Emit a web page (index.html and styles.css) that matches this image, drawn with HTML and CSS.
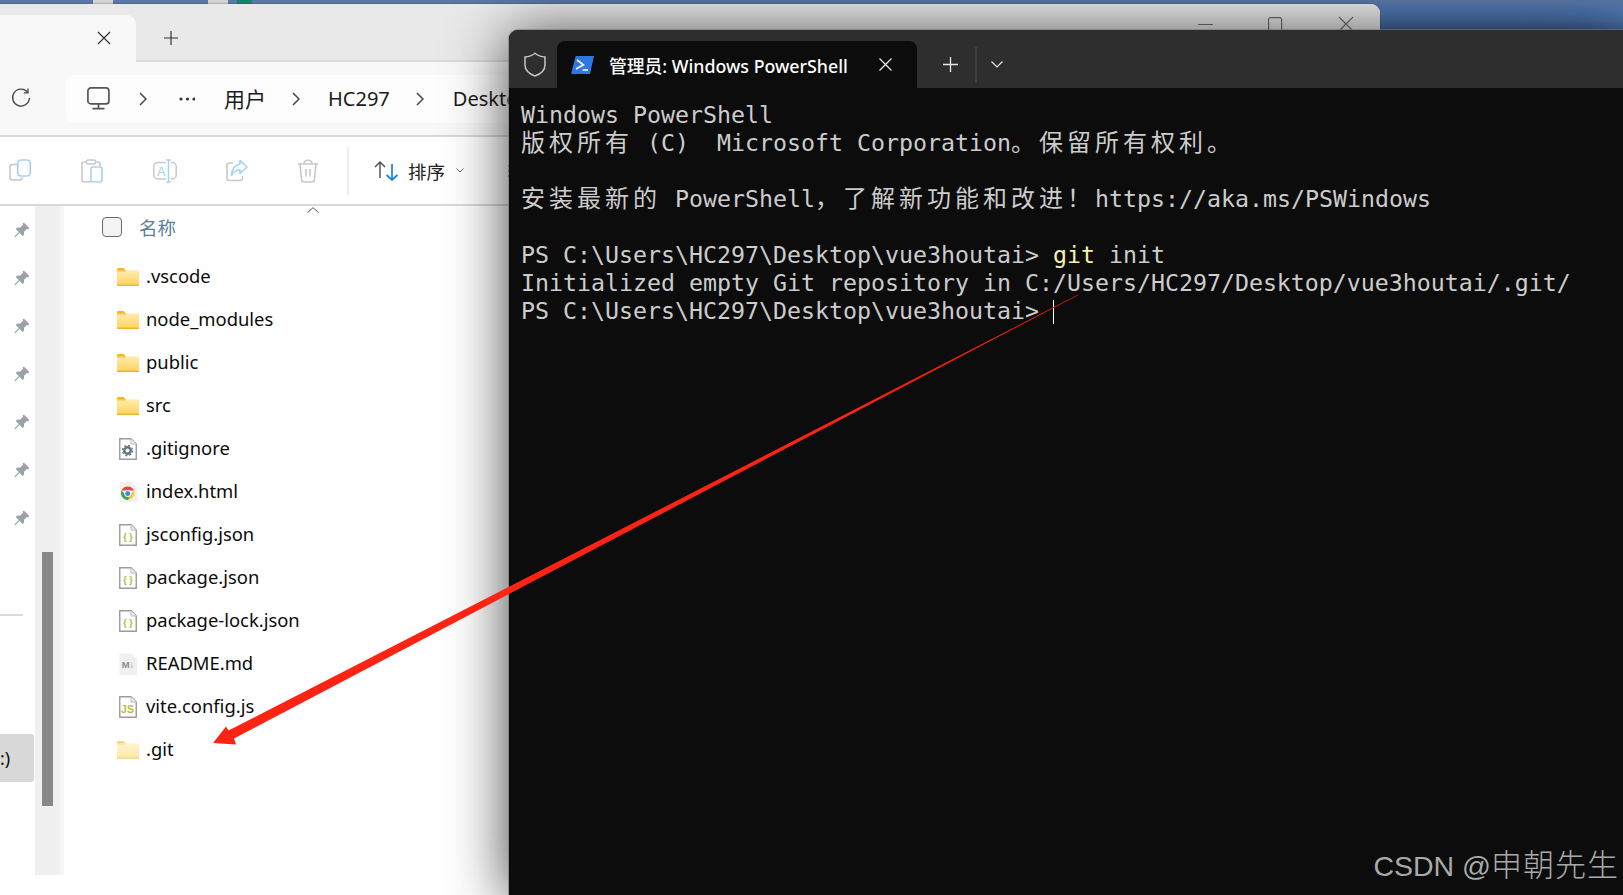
FILE: index.html
```html
<!DOCTYPE html>
<html lang="zh-CN">
<head>
<meta charset="utf-8">
<title>Windows PowerShell</title>
<link rel="stylesheet" href="styles.css">
</head>
<body>
<svg class="defs" width="0" height="0" aria-hidden="true">
  <defs>
    <linearGradient id="fg" x1="0" y1="0" x2="0" y2="1"><stop offset="0" stop-color="#ffedac"/><stop offset="1" stop-color="#ffd35f"/></linearGradient>
    <symbol id="folder" viewBox="0 0 22 18">
      <path d="M0 1.2Q0 0 1.2 0H6.5L9 2.4H0Z" fill="#f9b51c"/>
      <rect x="0" y="2.4" width="22" height="15" fill="url(#fg)"/>
      <rect x="0" y="16.6" width="22" height="1.4" fill="#eeb430"/>
      <rect x="0" y="2.4" width="9" height="1" fill="#f9b51c"/>
    </symbol>
    <symbol id="doc" viewBox="0 0 18 22">
      <path d="M.75.75H12L17.25 6V21.25H.75Z" fill="#fff" stroke="#9b9b9b" stroke-width="1.4"/>
      <path d="M12 .75V6H17.25" fill="#eee" stroke="#bbb" stroke-width="1"/>
    </symbol>
    <symbol id="pin" viewBox="0 0 16 16">
      <path d="M9.8.6 15.4 6.2 14 7.4 13 6.8 10 9.8 10.2 12.6 8.8 14 5.6 10.8 1 15.4.2 14.8 4.8 10 1.8 7 3.2 5.6 6 5.8 9 2.8 8.6 2Z" fill="#98a2a9"/>
    </symbol>
    <symbol id="chev" viewBox="0 0 8 14">
      <path d="M1 1 7 7 1 13" fill="none" stroke="#444" stroke-width="1.5"/>
    </symbol>
  </defs>
</svg>

<div class="strip">
  <span class="mark mark-a"></span>
  <span class="mark mark-b"></span>
  <span class="mark mark-c"></span>
</div>

<section class="explorer">
  <header class="ex-tabs">
    <div class="ex-tab">
      <svg class="ex-tab-x" width="14" height="14" viewBox="0 0 14 14"><path d="M1 1 13 13M13 1 1 13" stroke="#333" stroke-width="1.2"/></svg>
    </div>
    <svg class="ex-plus" width="16" height="16" viewBox="0 0 16 16"><path d="M8 1V15M1 8H15" stroke="#333" stroke-width="1.2"/></svg>
    <div class="win-ctrls">
      <svg width="16" height="14" viewBox="0 0 16 14"><path d="M0 7.5H15" stroke="#6f6f6f" stroke-width="1.2"/></svg>
      <svg width="16" height="14" viewBox="0 0 16 14"><rect x=".6" y=".6" width="13" height="20" rx="2" fill="none" stroke="#6f6f6f" stroke-width="1.2"/></svg>
      <svg width="16" height="14" viewBox="0 0 16 14"><path d="M1 0 15 14M15 0 1 14" stroke="#6f6f6f" stroke-width="1.2"/></svg>
    </div>
  </header>

  <nav class="ex-address">
    <svg class="refresh" width="20" height="20" viewBox="0 0 20 20"><path d="M16.6 4.4A8.4 8.4 0 1 0 18.4 10" fill="none" stroke="#444" stroke-width="1.3"/><path d="M17 .6V4.8H12.8" fill="none" stroke="#444" stroke-width="1.3"/></svg>
    <div class="crumbs">
      <svg width="23" height="23" viewBox="0 0 23 23"><rect x=".9" y=".9" width="21" height="16" rx="3" fill="none" stroke="#555" stroke-width="1.7"/><path d="M11.5 17V21M5.5 21.6H17.5" stroke="#555" stroke-width="1.7"/></svg>
      <svg class="chev" width="8" height="14"><use href="#chev"/></svg>
      <svg class="dots" width="19" height="6" viewBox="0 0 19 6"><circle cx="5" cy="3" r="1.6" fill="#333"/><circle cx="11.5" cy="3" r="1.6" fill="#333"/><circle cx="18" cy="3" r="1.6" fill="#333"/></svg>
      <span class="crumb crumb-cjk">用户</span>
      <svg class="chev" width="8" height="14"><use href="#chev"/></svg>
      <span class="crumb crumb-hc">HC297</span>
      <svg class="chev" width="8" height="14"><use href="#chev"/></svg>
      <span class="crumb">Desktop</span>
    </div>
  </nav>

  <div class="ex-toolbar">
    <svg class="tool" width="22" height="24" viewBox="0 0 22 24"><path d="M8 5.5H3.5Q1 5.5 1 8V18.5Q1 21 3.500 21H11Q13 21 13.500 18.500" fill="none" stroke="#c8c8c8" stroke-width="1.600"/><rect x="8.800" y="1" width="12.400" height="16" rx="3" fill="#fff" stroke="#a6d3f5" stroke-width="1.600"/></svg>
    <svg class="tool" width="22" height="24" viewBox="0 0 22 24"><path d="M10 22.800H3Q1 22.800 1 20.800V5Q1 3 3 3H17Q19 3 19 5V7" fill="none" stroke="#c8c8c8" stroke-width="1.600"/><rect x="5.500" y="1" width="9" height="4" rx="1.500" fill="#fff" stroke="#c8c8c8" stroke-width="1.400"/><rect x="10" y="8" width="11" height="15" rx="2" fill="#fff" stroke="#a6d3f5" stroke-width="1.600"/></svg>
    <svg class="tool" width="24" height="24" viewBox="0 0 24 24"><rect x=".8" y="3.500" width="22.400" height="16.500" rx="4" fill="none" stroke="#c8c8c8" stroke-width="1.500"/><rect x="13" y="1" width="5" height="22" fill="#fff"/><path d="M15.500 1V23M13 1H18M13 23H18" stroke="#a6d3f5" stroke-width="1.500" fill="none"/><text class="tool-a" x="4" y="16.500">A</text></svg>
    <svg class="tool tool-share" width="22" height="24" viewBox="0 0 22 24"><path d="M7 4H3.500Q1 4 1 6.500V19Q1 21.500 3.500 21.500H14Q16.500 21.500 16.500 19V17" fill="none" stroke="#c8c8c8" stroke-width="1.600"/><path d="M14 1.500 21 8 14 14.500V11Q8.500 11 5.500 16.500 6 6.500 14 5Z" fill="#fff" stroke="#a6d3f5" stroke-width="1.600" stroke-linejoin="round"/></svg>
    <svg class="tool tool-trash" width="22" height="24" viewBox="0 0 22 24"><path d="M1 5H21M7 5Q7 1.200 11 1.200T15 5M3 5 4.500 20.500Q4.700 23 7 23H15Q17.300 23 17.500 20.500L19 5M9 10V17.500M13 10V17.500" fill="none" stroke="#c8c8c8" stroke-width="1.600"/></svg>
    <span class="tool-sep"></span>
    <svg class="sort-ic" width="24" height="20" viewBox="0 0 24 20"><path d="M6 17V1M1 6 6 1 11 6" fill="none" stroke="#555" stroke-width="1.500"/><path d="M18 3V19M12.500 14 18 19 23.500 14" fill="none" stroke="#1583dc" stroke-width="1.700"/></svg>
    <span class="sort-label">排序</span>
    <svg class="sort-caret" width="8" height="5" viewBox="0 0 8 5"><path d="M.5.500 4 4 7.500.500" fill="none" stroke="#666" stroke-width="1"/></svg>
    <svg class="more" width="8" height="12" viewBox="0 0 8 12"><path d="M0 1H8M0 6H8M0 11H8" stroke="#555" stroke-width="1.400"/></svg>
  </div>

  <div class="ex-body">
    <aside class="pins">
      <div class="pin"><svg width="16" height="16"><use href="#pin"/></svg></div>
      <div class="pin"><svg width="16" height="16"><use href="#pin"/></svg></div>
      <div class="pin"><svg width="16" height="16"><use href="#pin"/></svg></div>
      <div class="pin"><svg width="16" height="16"><use href="#pin"/></svg></div>
      <div class="pin"><svg width="16" height="16"><use href="#pin"/></svg></div>
      <div class="pin"><svg width="16" height="16"><use href="#pin"/></svg></div>
      <div class="pin"><svg width="16" height="16"><use href="#pin"/></svg></div>
      <div class="side-sep"></div>
      <div class="side-sel">:)</div>
    </aside>
    <div class="track"><div class="thumb"></div></div>
    <div class="track-edge"></div>
    <main class="files">
      <div class="list-head">
        <span class="check"></span>
        <span class="col-name">名称</span>
        <svg class="sort-up" width="12" height="6" viewBox="0 0 12 6"><path d="M.5 5.500 6 .700 11.500 5.500" fill="none" stroke="#555" stroke-width="1"/></svg>
      </div>
      <div class="row"><svg class="ic" width="22" height="18"><use href="#folder"/></svg><span>.vscode</span></div>
      <div class="row"><svg class="ic" width="22" height="18"><use href="#folder"/></svg><span>node_modules</span></div>
      <div class="row"><svg class="ic" width="22" height="18"><use href="#folder"/></svg><span>public</span></div>
      <div class="row"><svg class="ic" width="22" height="18"><use href="#folder"/></svg><span>src</span></div>
      <div class="row">
        <svg class="ic" width="18" height="22" viewBox="0 0 18 22"><use href="#doc" width="18" height="22"/><circle cx="8.500" cy="12.500" r="3.200" fill="none" stroke="#62757d" stroke-width="2.400"/><circle cx="8.500" cy="12.500" r="5" fill="none" stroke="#62757d" stroke-width="1.400" stroke-dasharray="2 1.930"/></svg>
        <span>.gitignore</span>
      </div>
      <div class="row">
        <svg class="ic" width="20" height="22" viewBox="0 0 20 22"><path d="M1.500 1H13L19.500 6.500V21H1.500Z" fill="#f0f0f0"/><path d="M3.400 9.500A7 7 0 0 1 16 9.500H9.700Z" fill="#e2483b"/><path d="M16 9.500A7 7 0 0 1 10 19L13 13Z" fill="#f7c92f"/><path d="M3.400 9.500A7 7 0 0 0 10 19L13 13H7Z" fill="#3ba55c"/><circle cx="9.700" cy="12.500" r="3.400" fill="#fff"/><circle cx="9.700" cy="12.500" r="2.500" fill="#4a86e8"/></svg>
        <span>index.html</span>
      </div>
      <div class="row"><svg class="ic" width="18" height="22" viewBox="0 0 18 22"><use href="#doc" width="18" height="22"/><text class="ic-txt ic-brace" x="9" y="16">{ }</text></svg><span>jsconfig.json</span></div>
      <div class="row"><svg class="ic" width="18" height="22" viewBox="0 0 18 22"><use href="#doc" width="18" height="22"/><text class="ic-txt ic-brace" x="9" y="16">{ }</text></svg><span>package.json</span></div>
      <div class="row"><svg class="ic" width="18" height="22" viewBox="0 0 18 22"><use href="#doc" width="18" height="22"/><text class="ic-txt ic-brace" x="9" y="16">{ }</text></svg><span>package-lock.json</span></div>
      <div class="row">
        <svg class="ic" width="18" height="22" viewBox="0 0 18 22"><path d="M.5.500H12L18 6V22H.5Z" fill="#f0f0f0"/><text class="ic-txt ic-md" x="9" y="15">M↓</text></svg>
        <span>README.md</span>
      </div>
      <div class="row"><svg class="ic" width="18" height="22" viewBox="0 0 18 22"><use href="#doc" width="18" height="22"/><text class="ic-txt ic-js" x="8.500" y="17">JS</text></svg><span>vite.config.js</span></div>
      <div class="row"><svg class="ic ic-faded" width="22" height="18"><use href="#folder"/></svg><span>.git</span></div>
    </main>
  </div>
</section>

<section class="terminal">
  <header class="term-bar">
    <svg class="term-shield" width="22" height="25" viewBox="0 0 22 25"><path d="M11 1.200C8 3.800 4.500 4.800 1 5V13C1 18 5.500 22 11 24 16.500 22 21 18 21 13V5C17.500 4.800 14 3.800 11 1.200Z" fill="none" stroke="#c4c4c4" stroke-width="1.500"/></svg>
    <div class="term-tab">
      <svg class="ps-ic" width="23" height="18" viewBox="0 0 23 18"><path d="M4.500.500Q4.800 0 5.500 0H23L19 18H1Q0 18 .3 17Z" fill="#2f78e4"/><path d="M6 4 12.500 8.800 5 13" fill="none" stroke="#fff" stroke-width="1.600"/><path d="M11.500 14H17" stroke="#fff" stroke-width="1.500"/></svg>
      <span class="term-title">管理员: Windows PowerShell</span>
      <svg width="13" height="13" viewBox="0 0 13 13"><path d="M.5.500 12.500 12.500M12.500.500.500 12.500" stroke="#eee" stroke-width="1.200"/></svg>
    </div>
    <svg class="term-plus" width="15" height="15" viewBox="0 0 15 15"><path d="M7.500 0V15M0 7.500H15" stroke="#e8e8e8" stroke-width="1.300"/></svg>
    <span class="term-sep"></span>
    <svg class="term-drop" width="12" height="7" viewBox="0 0 12 7"><path d="M.5.500 6 6 11.500.500" fill="none" stroke="#e8e8e8" stroke-width="1.200"/></svg>
  </header>
  <div class="term-body">
    <div class="line">Windows PowerShell</div>
    <div class="line"><span class="cjk">版权所有</span> (C)  Microsoft Corporation<span class="cjk">。保留所有权利。</span></div>
    <div class="line"> </div>
    <div class="line"><span class="cjk">安装最新的</span> PowerShell<span class="cjk">，了解新功能和改进！</span>https://aka.ms/PSWindows</div>
    <div class="line"> </div>
    <div class="line">PS C:\Users\HC297\Desktop\vue3houtai&gt; <span class="cmd">git</span> init</div>
    <div class="line">Initialized empty Git repository in C:/Users/HC297/Desktop/vue3houtai/.git/</div>
    <div class="line">PS C:\Users\HC297\Desktop\vue3houtai&gt; <span class="cursor"></span></div>
  </div>
  <div class="watermark">CSDN @<span class="wm-cjk">申朝先生</span></div>
</section>

<svg class="arrow" width="1623" height="895" viewBox="0 0 1623 895" aria-hidden="true">
  <polygon points="213,743 226,726.500 228.500,730.500 1078,295 234,738.500 236,744.500" fill="#ff2314"/>
  <line x1="880" y1="397" x2="1078" y2="295" stroke="#d81c10" stroke-width=".8"/>
</svg>
</body>
</html>
```

FILE: styles.css
```css
* { box-sizing: border-box; }
html, body { margin: 0; height: 100%; }
body {
  position: relative;
  overflow: hidden;
  background: linear-gradient(#557cb4 0, #4a72ac 20px, #3e5d8e 32px);
  font-family: "Noto Sans", "Noto Sans CJK SC", sans-serif;
  color: #111;
}
.defs { position: absolute; }

.strip { display: flex; height: 4px; background: #5a79a8; padding-left: 93px; }
.mark { display: block; height: 4px; width: 20px; background: #d4d4d4; }
.mark-b { margin-left: 95px; }
.mark-c { margin-left: 9px; width: 15px; background: #12856f; }

/* explorer window */
.explorer {
  position: absolute;
  left: 0; top: 4px; bottom: 0;
  width: 1380px;
  display: flex;
  flex-direction: column;
  background: #fff;
  border-top-right-radius: 9px;
  overflow: hidden;
  box-shadow: 0 0 2px rgba(60, 60, 60, .8);
}
.ex-tabs {
  flex: none;
  display: flex;
  align-items: flex-start;
  height: 58px;
  background: #e9e9e9;
  border-bottom: 2px solid #dadada;
}
.ex-tab {
  display: flex;
  align-items: center;
  justify-content: flex-end;
  width: 136px;
  height: 47px;
  margin-top: 11px;
  padding: 0 25px 1px 0;
  background: #f8f8f8;
  border-top-right-radius: 9px;
}
.ex-plus { margin: 26px 0 0 27px; }
.win-ctrls {
  display: flex;
  gap: 54px;
  margin: 13px 0 0 1019px;
}
.win-ctrls svg { overflow: visible; }

.ex-address {
  flex: none;
  display: flex;
  align-items: center;
  height: 73px;
  padding-left: 11px;
  background: #f8f8f8;
}
.refresh { flex: none; margin-right: 35px; margin-top: -2px; }
.crumbs {
  display: flex;
  align-items: center;
  gap: 29px;
  width: 1300px;
  height: 48px;
  padding-left: 21px;
  background: #fdfdfd;
  border-radius: 8px;
  font-size: 20px;
  color: #1b1b1b;
}
.crumb { line-height: 48px; }
.crumb-cjk { font-size: 21px; margin-right: -3px; }
.crumb-hc { margin-left: -1px; margin-right: -3px; }
.chev { flex: none; }
.dots { flex: none; }

.ex-toolbar {
  flex: none;
  display: flex;
  align-items: center;
  gap: 50px;
  height: 71px;
  padding-left: 9px;
  background: #fff;
  border-top: 2px solid #d9d9d9;
  border-bottom: 2px solid #d9d9d9;
}
.tool { flex: none; }
.tool-share { margin-left: -1px; }
.tool-trash { margin-left: -1px; }
.tool-a { font: 13px "Liberation Sans", sans-serif; fill: #a6d3f5; }
.tool-sep { width: 2px; height: 48px; margin-left: -22px; background: #ececec; }
.sort-ic { flex: none; margin-left: -25px; }
.sort-label { margin-left: -40px; font-size: 18.500px; color: #222; }
.sort-caret { margin-left: -39px; }
.more { margin-left: -6px; }

.ex-body { flex: 1; display: flex; min-height: 0; }
.pins { flex: none; width: 35px; }
.pin { display: flex; align-items: center; height: 48px; padding-left: 14px; }
.side-sep { width: 23px; height: 2px; margin-top: 72px; background: #dcdcdc; }
.side-sel {
  display: flex;
  align-items: center;
  width: 34px;
  height: 48px;
  margin-top: 118px;
  background: #d8d8d8;
  border-radius: 0 3px 3px 0;
  font-size: 18px;
}
.track {
  flex: none;
  width: 25px;
  height: 669px;
  padding: 346px 0 0 7px;
  background: #f0f0f0;
}
.thumb { width: 11px; height: 254px; background: #888; }
.track-edge { flex: none; width: 4px; height: 669px; background: #f7f7f7; }

.files { position: relative; flex: 1; padding-left: 38px; }
.list-head { display: flex; align-items: center; gap: 17px; height: 42px; margin-bottom: 7px; }
.check { width: 20px; height: 20px; background: #f3f3f3; border: 1.5px solid #6b6b6b; border-radius: 4px; }
.col-name { font-size: 18.500px; color: #5b7d99; }
.sort-up { position: absolute; left: 243px; top: 1px; }
.row {
  display: flex;
  align-items: center;
  height: 43px;
  padding-left: 15px;
  font-size: 18.400px;
  color: #0b0b0b;
}
.row span { margin-bottom: 2px; }
.ic { flex: none; width: 22px; margin-right: 7px; }
.ic[width="18"] { padding: 0 2px; width: 22px; }
.ic[width="20"] { padding: 0 1px; width: 22px; }
.ic-faded { opacity: .55; }
.ic-txt { font-family: "Liberation Sans", sans-serif; text-anchor: middle; font-weight: 700; }
.ic-brace { font-size: 9px; fill: #b7b82c; }
.ic-md { font-size: 9.500px; fill: #8d8d8d; }
.ic-js { font-size: 10.500px; fill: #bcbc3a; }

/* terminal window */
.terminal {
  position: absolute;
  left: 509px; top: 30px; right: 0; bottom: 0;
  display: flex;
  flex-direction: column;
  background: #0c0c0c;
  border-top-left-radius: 9px;
  box-shadow: 0 0 0 1px rgba(120, 120, 120, .6), 0 6px 60px rgba(0, 0, 0, .75);
}
.term-bar {
  flex: none;
  display: flex;
  align-items: center;
  height: 58px;
  padding: 11px 0 0 15px;
  background: #2e2e2e;
  border-top-left-radius: 9px;
}
.term-shield { flex: none; margin-right: 11px; }
.term-tab {
  flex: none;
  display: flex;
  align-items: center;
  width: 360px;
  height: 47px;
  padding: 0 25px 0 14px;
  background: #0c0c0c;
  border-radius: 8px 8px 0 0;
}
.ps-ic { flex: none; margin-right: 15px; }
.term-title { flex: 1; font-size: 17.800px; font-weight: 500; color: #fff; white-space: nowrap; }
.term-plus { flex: none; margin-left: 26px; }
.term-sep { flex: none; width: 2px; height: 36px; margin-left: 17px; background: #414141; }
.term-drop { flex: none; margin-left: 14px; }

.term-body {
  flex: 1;
  padding: 13px 0 0 12px;
  font-family: "DejaVu Sans Mono", "Noto Sans CJK SC", monospace;
  font-size: 23.250px;
  line-height: 28px;
  color: #ccc;
}
.line { height: 28px; white-space: pre; }
.cjk { font-family: "Noto Sans CJK SC", sans-serif; font-size: 24px; line-height: 0; letter-spacing: 4px; }
.cmd { color: #f9f1a5; }
.cursor { display: inline-block; width: 1px; height: 24px; background: #fff; vertical-align: -5px; }

.watermark {
  position: absolute;
  right: 4px; bottom: 13px;
  font-family: "Liberation Sans", "Noto Sans CJK SC", sans-serif;
  font-size: 28.500px;
  line-height: 32px;
  color: #a9a9a9;
  white-space: nowrap;
}
.wm-cjk { font-family: "Noto Sans CJK SC", sans-serif; font-size: 31px; font-weight: 300; line-height: 0; letter-spacing: 1px; }

.arrow { position: absolute; left: 0; top: 0; pointer-events: none; }
```
